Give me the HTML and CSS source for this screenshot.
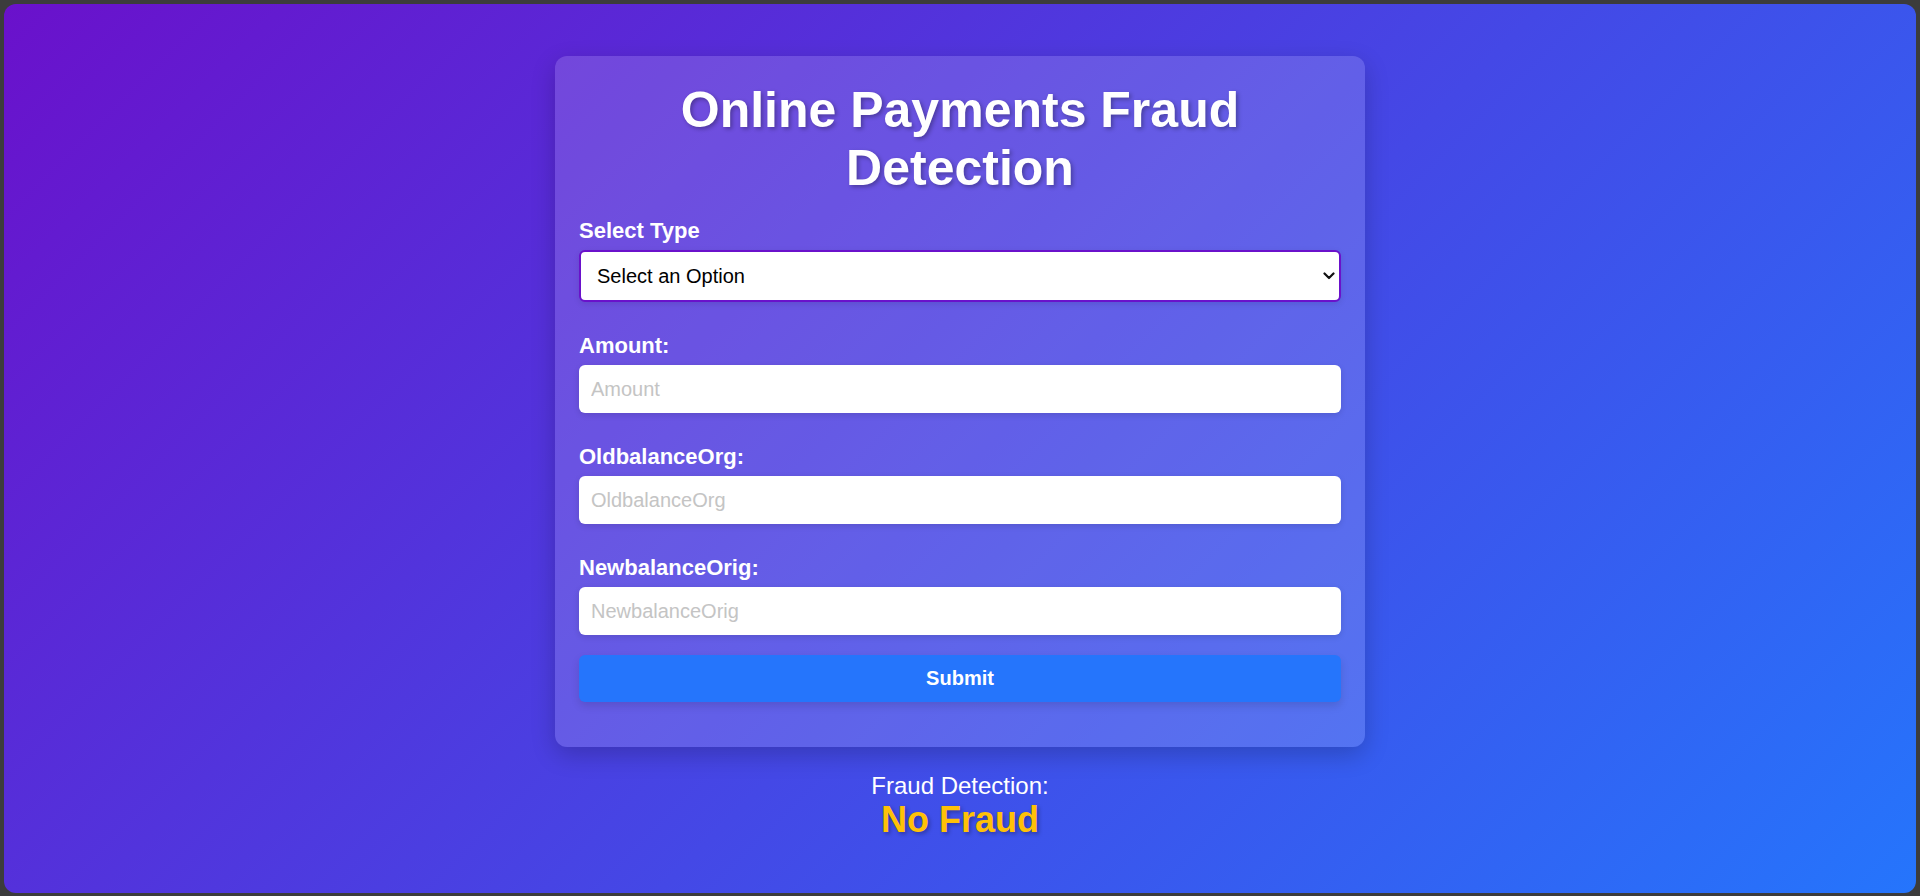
FILE: index.html
```html
<!DOCTYPE html>
<html lang="en">
<head>
<meta charset="utf-8">
<title>Online Payments Fraud Detection</title>
<link rel="stylesheet" href="styles.css">
</head>
<body>
<div class="app">
  <div class="card">
    <h1 class="title">Online Payments Fraud Detection</h1>
    <form class="form">
      <div class="group">
        <label class="label" for="type">Select Type</label>
        <div class="select-wrap">
          <select id="type" class="select">
            <option>Select an Option</option>
          </select>
          <svg class="chevron" width="12" height="8" viewBox="0 0 12 8"><path d="M1.5 1.5 L6 6 L10.5 1.5" fill="none" stroke="#111" stroke-width="2.2" stroke-linecap="round" stroke-linejoin="round"/></svg>
        </div>
      </div>
      <div class="group">
        <label class="label" for="amount">Amount:</label>
        <input id="amount" class="input" type="text" placeholder="Amount">
      </div>
      <div class="group">
        <label class="label" for="old">OldbalanceOrg:</label>
        <input id="old" class="input" type="text" placeholder="OldbalanceOrg">
      </div>
      <div class="group group-last">
        <label class="label" for="new">NewbalanceOrig:</label>
        <input id="new" class="input" type="text" placeholder="NewbalanceOrig">
      </div>
      <button type="button" class="submit">Submit</button>
    </form>
  </div>
  <div class="result">
    <div class="result-label">Fraud Detection:</div>
    <div class="result-value">No Fraud</div>
  </div>
</div>
</body>
</html>
```
FILE: styles.css
```css
html, body {
  margin: 0;
  padding: 0;
}
body {
  background: #3c3c3c;
  padding: 4px 4px 3px 4px;
  font-family: "Liberation Sans", Arial, sans-serif;
  box-sizing: border-box;
  height: 896px;
}
.app {
  height: 889px;
  border-radius: 12px;
  background: linear-gradient(135deg, #6a11cb 0%, #2575fc 100%);
  display: flex;
  flex-direction: column;
  align-items: center;
  padding-top: 52px;
  box-sizing: border-box;
}
.card {
  width: 810px;
  box-sizing: border-box;
  padding: 24px 24px 45px;
  background: rgba(255, 255, 255, 0.15);
  border-radius: 12px;
  box-shadow: 0 8px 24px rgba(0, 0, 0, 0.2);
}
.title {
  margin: 2px 0 22px;
  font-size: 50px;
  font-weight: bold;
  line-height: 57.5px;
  color: #fff;
  text-align: center;
  text-shadow: 2px 2px 4px rgba(0, 0, 0, 0.3);
}
.form {
  display: flex;
  flex-direction: column;
  margin: 0;
}
.group {
  display: flex;
  flex-direction: column;
  margin-bottom: 32px;
}
.group-last {
  margin-bottom: 20px;
}
.label {
  font-size: 22px;
  font-weight: bold;
  color: #fff;
  line-height: 24px;
  margin-bottom: 7px;
}
.select-wrap {
  position: relative;
}
.select {
  -webkit-appearance: none;
  appearance: none;
  width: 100%;
  height: 52px;
  box-sizing: border-box;
  border: 2px solid #6a11cb;
  border-radius: 6px;
  background: #fff;
  padding: 0 16px;
  font-family: "Liberation Sans", Arial, sans-serif;
  font-size: 20px;
  color: #000;
  box-shadow: 0 2px 6px rgba(0, 0, 0, 0.1);
}
.chevron {
  position: absolute;
  right: 6px;
  top: 22px;
}
.input {
  height: 48px;
  box-sizing: border-box;
  border: none;
  border-radius: 6px;
  background: #fff;
  padding: 0 12px;
  font-family: "Liberation Sans", Arial, sans-serif;
  font-size: 20px;
  color: #000;
  box-shadow: 0 2px 6px rgba(0, 0, 0, 0.12);
  outline: none;
}
.input::placeholder {
  color: #c4c4c4;
}
.submit {
  height: 47px;
  border: none;
  border-radius: 6px;
  background: #2575fc;
  color: #fff;
  font-family: "Liberation Sans", Arial, sans-serif;
  font-size: 20px;
  font-weight: bold;
  box-shadow: 0 4px 8px rgba(0, 0, 0, 0.12);
}
.result {
  margin-top: 25px;
  text-align: center;
}
.result-label {
  font-size: 24px;
  color: #fff;
  line-height: 27px;
}
.result-value {
  font-size: 36px;
  font-weight: bold;
  color: #ffc107;
  line-height: 41px;
  text-shadow: 2px 2px 4px rgba(0, 0, 0, 0.3);
}
```
